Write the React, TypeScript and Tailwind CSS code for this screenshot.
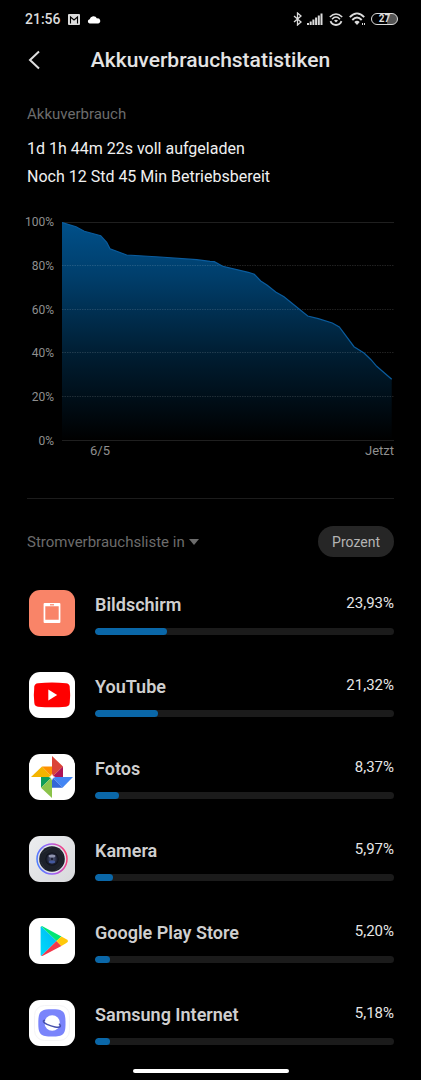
import React from 'react';

interface Verbraucher {
  name: string;
  prozent: string;
  breite: number;
  icon: React.ReactNode;
}

const BildschirmIcon = () => (
  <svg viewBox="0 0 46 46" className="h-full w-full">
    <rect width="46" height="46" rx="11" fill="#f98468" />
    <path fillRule="evenodd" fill="#fff" d="M15.6 13h14.8a1 1 0 0 1 1 1v18a1 1 0 0 1-1 1H15.600a1 1 0 0 1-1-1V14a1 1 0 0 1 1-1ZM16.300 16.200v13.600h13.400V16.200Z" />
    <rect x="21" y="14.200" width="4" height="1.200" fill="#f98468" />
  </svg>
);

const YouTubeIcon = () => (
  <svg viewBox="0 0 46 46" className="h-full w-full">
    <rect width="46" height="46" rx="11" fill="#fff" />
    <path fill="#f00" d="M9 11.200Q23 10 37 11.200Q40.300 11.600 40.700 14.600Q41.600 23 40.700 31Q40.300 34.300 37 34.700Q23 35.900 9 34.700Q5.700 34.300 5.300 31Q4.400 23 5.300 14.600Q5.700 11.600 9 11.200Z" />
    <path fill="#fff" d="M19.300 17.600v11l8.900-5.500Z" />
  </svg>
);

const FotosIcon = () => (
  <svg viewBox="0 0 46 46" className="h-full w-full">
    <rect width="46" height="46" rx="11" fill="#fff" />
    <path fill="#db4437" d="M23 2v21L34 12.500Z" />
    <path fill="#ad1457" d="M34 12.500V23H23Z" />
    <path fill="#f4b400" d="M2 23 13 12.500 23 23Z" />
    <path fill="#ff9100" d="M13 12.500H23V23Z" />
    <path fill="#0f9d58" d="M12 23h11L12 33.800Z" />
    <path fill="#8bc34a" d="M23 23v21L12 33.800Z" />
    <path fill="#4285f4" d="M23 23h21L33.500 33.800Z" />
    <path fill="#3367d6" d="M23 23l10.500 10.800H23Z" />
    <path fill="#fff" d="m23 19.500 1 2.500 2.500 1-2.500 1-1 2.500-1-2.500-2.500-1 2.500-1Z" />
  </svg>
);

const KameraIcon = () => (
  <svg viewBox="0 0 46 46" className="h-full w-full">
    <defs>
      <linearGradient id="kameraFlaeche" x1="0" y1="0" x2="1" y2="1">
        <stop offset="0" stopColor="#ecedef" />
        <stop offset="1" stopColor="#d8d9dc" />
      </linearGradient>
      <linearGradient id="kameraRing" x1="0" y1="0.600" x2="1" y2="0.400">
        <stop offset="0" stopColor="#4b7cff" />
        <stop offset="0.500" stopColor="#a35cf5" />
        <stop offset="1" stopColor="#ff3b70" />
      </linearGradient>
      <radialGradient id="kameraLinse">
        <stop offset="0" stopColor="#5c6285" />
        <stop offset="0.500" stopColor="#343a56" />
        <stop offset="1" stopColor="#0b0d15" />
      </radialGradient>
    </defs>
    <rect width="46" height="46" rx="11" fill="url(#kameraFlaeche)" />
    <circle cx="23" cy="23" r="15" fill="#dfe0e8" stroke="url(#kameraRing)" strokeWidth="1.500" />
    <circle cx="23" cy="23" r="12.800" fill="#1d212a" />
    <path d="M13 17 23 11M34 19 29 12M33 29l-7 6M12 26l4 7" stroke="#2c313b" strokeWidth="0.800" />
    <circle cx="23" cy="23" r="6.600" fill="url(#kameraLinse)" />
    <ellipse cx="23" cy="20" rx="3.400" ry="1.500" fill="#9094ae" />
    <ellipse cx="23" cy="26" rx="3.200" ry="1.400" fill="#43589e" />
    <circle cx="23" cy="23" r="1.300" fill="#1e2136" />
  </svg>
);

const PlayStoreIcon = () => (
  <svg viewBox="0 0 46 46" className="h-full w-full">
    <defs>
      <linearGradient id="playBlau" x1="1" y1="0" x2="0" y2="1">
        <stop offset="0" stopColor="#00b4f5" />
        <stop offset="1" stopColor="#00dcfa" />
      </linearGradient>
    </defs>
    <rect width="46" height="46" rx="11" fill="#fff" />
    <path fill="url(#playBlau)" d="M12.300 8.300Q11.600 8.600 11.600 9.600v27Q11.600 37.700 12.300 38L27.500 23.100Z" />
    <path fill="#00e676" d="M12.300 8.300Q13 7.900 13.900 8.400L32.400 18.400 27.500 23.100Z" />
    <path fill="#f4374a" d="M12.300 38Q13 38.300 13.900 37.800L32.400 27.900 27.500 23.100Z" />
    <path fill="#ffc80a" d="M32.400 18.400l5 2.900Q39 22.300 39 23.100T37.400 25l-5 2.900-4.900-4.800Z" />
  </svg>
);

const SamsungInternetIcon = () => (
  <svg viewBox="0 0 46 46" className="h-full w-full">
    <rect width="46" height="46" rx="11" fill="#fff" />
    <rect x="5.500" y="5.500" width="35" height="35" rx="10" fill="none" stroke="#f4f4f6" />
    <path fill="#7a84fb" d="M23 9.300c11.500 0 13.500 2.200 13.500 13.700S34.500 36.600 23 36.600 9.300 34.500 9.300 23 11.500 9.300 23 9.300Z" />
    <circle cx="23.200" cy="23" r="7.700" fill="#fff" />
    <path fill="none" stroke="#4751ad" strokeWidth="1.500" strokeLinecap="round" d="M15.500 20.300C13.300 20.800 14.500 22.800 18 24.400c5 2.200 12 3.800 13.300 2.100.5-.8 0-1.600-.9-2.300" />
  </svg>
);

const verbraucherListe: Verbraucher[] = [
  { name: 'Bildschirm', prozent: '23,93%', breite: 24, icon: <BildschirmIcon /> },
  { name: 'YouTube', prozent: '21,32%', breite: 21, icon: <YouTubeIcon /> },
  { name: 'Fotos', prozent: '8,37%', breite: 8, icon: <FotosIcon /> },
  { name: 'Kamera', prozent: '5,97%', breite: 6, icon: <KameraIcon /> },
  { name: 'Google Play Store', prozent: '5,20%', breite: 5, icon: <PlayStoreIcon /> },
  { name: 'Samsung Internet', prozent: '5,18%', breite: 5, icon: <SamsungInternetIcon /> },
];

const verlauf =
  '0,0.500 14,4.700 22.300,9.300 38.700,13.700 44.700,20.300 48,26.700 64.700,33 98,35 134.700,37.700 148,39.300 152.300,39.700 160.700,44.300 186.300,50.300 192.300,52.300 198.700,59 205.300,63.300 213.700,70 222,74.700 245.700,94 256.300,96.700 270.300,101 277.300,105 292,124.700 302,131 309,137.700 314.700,144.300 329.700,157.300';

const StatusBar = () => (
  <div className="flex h-[38px] items-center justify-between pl-[25px] pr-[23px] text-[#dcdcdc]">
    <div className="flex items-center">
      <span className="text-[14px] font-medium leading-4">21:56</span>
      <svg viewBox="0 0 12 11" className="ml-[7px] h-[11px] w-3">
        <rect width="12" height="11" rx="1" fill="#dcdcdc" />
        <path d="M2.500 9.500V3L6 6 9.500 3v6.500" fill="none" stroke="#000" strokeWidth="1.100" />
      </svg>
      <svg viewBox="0 0 14 9" className="ml-[7px] h-[9px] w-[14px]">
        <path fill="#fff" d="M2.600 8.500A2.200 2.200 0 0 1 2.600 4.200 4 4 0 0 1 10 3.400 2.600 2.600 0 0 1 11.200 8.500Z" />
      </svg>
    </div>
    <div className="flex items-center">
      <svg viewBox="0 0 9 14" className="h-[14px] w-[9px]" fill="none" stroke="#dcdcdc" strokeWidth="1.300">
        <path d="M1 4l7 6-3.500 3V1L8 4 1 10" />
      </svg>
      <svg viewBox="0 0 16 12" className="ml-[5px] h-3 w-4" fill="#dcdcdc">
        <path d="M0 12V10h2v2ZM2.700 12V8.500h2V12ZM5.400 12V6.500h2V12ZM8.100 12V4.500h2V12ZM10.800 12V2.500h2V12ZM13.500 12V.5h2V12Z" />
      </svg>
      <svg viewBox="0 0 14 13" className="ml-[6px] h-[13px] w-[14px]" fill="none" stroke="#dcdcdc" strokeWidth="1.500">
        <path d="M.8 4Q7-2.200 13.200 4M3 6.200Q7 2 11 6.200" />
        <path d="M5 7.500Q7 6 9 7.500L7 9.500Z" fill="#dcdcdc" stroke="none" />
        <path d="M1.500 8.200Q3 12 7 12t5.500-3.800" strokeWidth="1.800" />
      </svg>
      <svg viewBox="0 0 18 14" className="ml-[6px] h-[14px] w-[18px]" fill="none" stroke="#dcdcdc" strokeWidth="1.900">
        <path d="M.8 5.200Q8-2.500 15.200 5.200M3.300 8Q8 3 12.700 8" />
        <path d="M5.300 10Q8 7.500 10.700 10L8 13Z" fill="#dcdcdc" stroke="none" />
        <path d="M13.500 11v2M15.500 11v2" strokeWidth="1" />
      </svg>
      <div className="ml-1 flex h-3 w-[27px] items-center justify-center rounded-full border border-[#dcdcdc] bg-gradient-to-r from-black from-60% to-[#555] to-60% text-[10px] font-bold leading-3">27</div>
    </div>
  </div>
);

const VerbrauchsDiagramm = () => (
  <section aria-label="Akkustand" className="mt-[31px] text-[#8f8f8f]">
    <div className="flex">
      <div className="-my-[10px] flex w-[27px] shrink-0 flex-col items-end justify-between text-[12px] leading-5">
        {['100%', '80%', '60%', '40%', '20%', '0%'].map((stufe) => (
          <span key={stufe}>{stufe}</span>
        ))}
      </div>
      <svg viewBox="0 0 332 219" preserveAspectRatio="none" className="ml-2 h-[219px] min-w-0 flex-1">
        <defs>
          <linearGradient id="akkuVerlauf" gradientUnits="userSpaceOnUse" x1="0" y1="0" x2="0" y2="218">
            <stop offset="0" stopColor="#00508a" />
            <stop offset="0.250" stopColor="#003e6b" />
            <stop offset="0.600" stopColor="#001e33" />
            <stop offset="1" stopColor="#000" />
          </linearGradient>
        </defs>
        <path d={`M0,218 L${verlauf} 329.700,218Z`} fill="url(#akkuVerlauf)" />
        <path d="M0 .5h332M0 218.500h332" stroke="#1f1f1f" />
        <path d="M0 43.500h332M0 87.500h332M0 130.500h332M0 174.500h332" stroke="#fff" strokeOpacity="0.130" strokeDasharray="1.500 1" />
        <polyline points={verlauf} fill="none" stroke="#0a5c9e" strokeWidth="1.200" />
      </svg>
    </div>
    <div className="flex justify-between pl-[63px] text-[13px] leading-5">
      <span>6/5</span>
      <span>Jetzt</span>
    </div>
  </section>
);

const VerbraucherZeile: React.FC<{ eintrag: Verbraucher }> = ({ eintrag }) => (
  <li className="flex h-[46px] items-stretch">
    <div className="ml-[2px] h-[46px] w-[46px] shrink-0">{eintrag.icon}</div>
    <div className="ml-5 flex min-w-0 flex-1 flex-col justify-between pb-px pt-[3px]">
      <div className="flex items-start justify-between">
        <h2 className="text-[18px] font-semibold leading-6 text-[#cfcfcf]">{eintrag.name}</h2>
        <span className="text-[15px] leading-5 text-[#e6e6e6]">{eintrag.prozent}</span>
      </div>
      <div className="h-[7px] overflow-hidden rounded-full bg-[#1b1b1b]">
        <div className="h-full rounded-full bg-[#0a67a8]" style={{ width: `${eintrag.breite}%` }}></div>
      </div>
    </div>
  </li>
);

const App: React.FC = () => {
  return (
    <div className="flex min-h-screen flex-col bg-black font-['Roboto',sans-serif]">
      <StatusBar />

      <header className="flex h-11 items-center px-[27px]">
        <button type="button" aria-label="Zurück" className="flex h-11 w-5 shrink-0 items-center">
          <svg viewBox="0 0 14 20" className="h-5 w-[14px]" fill="none" stroke="#dedede" strokeWidth="2">
            <path d="M12 1.500 3 10l9 8.500" />
          </svg>
        </button>
        <h1 className="flex-1 pr-5 text-center text-[21px] font-medium leading-7 text-[#e4e4e4]">Akkuverbrauchstatistiken</h1>
      </header>

      <main className="px-[27px]">
        <p className="mt-[22px] text-[15px] leading-5 text-[#6c6c6c]">Akkuverbrauch</p>
        <div className="mt-[11px] text-[16px] leading-7 text-[#f0f0f0]">
          <p>1d 1h 44m 22s voll aufgeladen</p>
          <p>Noch 12 Std 45 Min Betriebsbereit</p>
        </div>

        <VerbrauchsDiagramm />

        <div className="mt-[37px] border-t border-[#1c1c1c]"></div>

        <div className="mt-[27px] flex items-center justify-between">
          <div className="flex items-center text-[#6c6c6c]">
            <select aria-label="Sortierung der Liste" className="appearance-none bg-transparent text-[15px] leading-5">
              <option>Stromverbrauchsliste in</option>
            </select>
            <svg viewBox="0 0 10 6" className="ml-1 h-[6px] w-[10px]" fill="#6c6c6c">
              <path d="M0 0h10L5 6Z" />
            </svg>
          </div>
          <button type="button" className="h-[31px] rounded-full bg-[#262626] px-[14px] text-[14px] leading-5 text-[#b4b4b4]">Prozent</button>
        </div>

        <ul className="mt-[33px] flex flex-col gap-9">
          {verbraucherListe.map((eintrag) => (
            <VerbraucherZeile key={eintrag.name} eintrag={eintrag} />
          ))}
        </ul>
      </main>

      <div className="mx-auto mb-[7px] mt-auto h-1 w-[156px] rounded-full bg-white"></div>
    </div>
  );
};

export default App;
